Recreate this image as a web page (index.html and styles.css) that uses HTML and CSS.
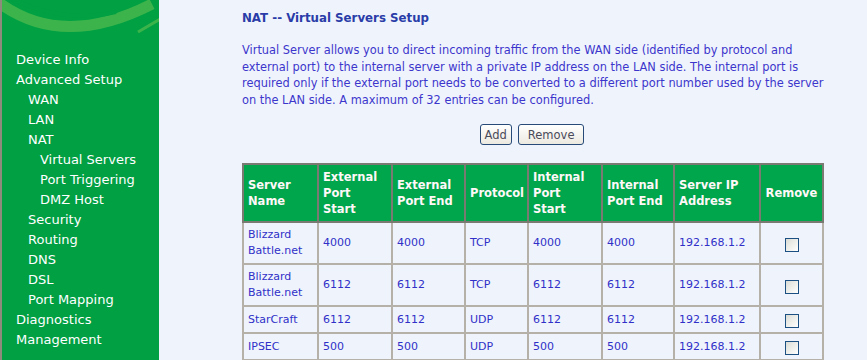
FILE: index.html
```html
<!DOCTYPE html>
<html>
	<head>
		<title>NAT -- Virtual Servers Setup</title>
		<meta charset="utf-8">
		<link rel="stylesheet" href="styles.css">
	</head>

	<body>
		<div class="page">
			<div class="menu">
				<svg class="logo" width="157" height="46" viewBox="0 0 157 46">
					<path d="M-4 2 Q60 50 150 4" stroke="#3cb44b" stroke-width="11" fill="none"/>
					<path d="M8 -2 Q60 24 114 12" stroke="#00a043" stroke-width="4" fill="none"/>
					<path d="M136 32 L160 18" stroke="#3cb44b" stroke-width="3" fill="none"/>
				</svg>
				<div class="menu-item">Device Info</div>
				<div class="menu-item">Advanced Setup</div>
				<div class="menu-item sub">WAN</div>
				<div class="menu-item sub">LAN</div>
				<div class="menu-item sub">NAT</div>
				<div class="menu-item subsub">Virtual Servers</div>
				<div class="menu-item subsub">Port Triggering</div>
				<div class="menu-item subsub">DMZ Host</div>
				<div class="menu-item sub">Security</div>
				<div class="menu-item sub">Routing</div>
				<div class="menu-item sub">DNS</div>
				<div class="menu-item sub">DSL</div>
				<div class="menu-item sub">Port Mapping</div>
				<div class="menu-item">Diagnostics</div>
				<div class="menu-item">Management</div>
			</div>

			<div class="content">
				<div class="title">NAT -- Virtual Servers Setup</div>
				<p class="intro">Virtual Server allows you to direct incoming traffic from the WAN side (identified by protocol and external port) to the internal server with a private IP address on the LAN side. The internal port is required only if the external port needs to be converted to a different port number used by the server on the LAN side. A maximum of 32 entries can be configured.</p>

				<div class="button-row">
					<button class="btn">Add</button>
					<button class="btn">Remove</button>
				</div>

				<table class="servers">
					<colgroup>
						<col style="width:75px">
						<col style="width:74px">
						<col style="width:73px">
						<col style="width:63px">
						<col style="width:74px">
						<col style="width:72px">
						<col style="width:86px">
						<col style="width:63px">
					</colgroup>
					<tr>
						<th>Server Name</th>
						<th>External Port Start</th>
						<th>External Port End</th>
						<th>Protocol</th>
						<th>Internal Port Start</th>
						<th>Internal Port End</th>
						<th>Server IP Address</th>
						<th class="center">Remove</th>
					</tr>
					<tr>
						<td>Blizzard Battle.net</td>
						<td>4000</td>
						<td>4000</td>
						<td>TCP</td>
						<td>4000</td>
						<td>4000</td>
						<td>192.168.1.2</td>
						<td class="center"><input type="checkbox" class="rm"></td>
					</tr>
					<tr>
						<td>Blizzard Battle.net</td>
						<td>6112</td>
						<td>6112</td>
						<td>TCP</td>
						<td>6112</td>
						<td>6112</td>
						<td>192.168.1.2</td>
						<td class="center"><input type="checkbox" class="rm"></td>
					</tr>
					<tr>
						<td>StarCraft</td>
						<td>6112</td>
						<td>6112</td>
						<td>UDP</td>
						<td>6112</td>
						<td>6112</td>
						<td>192.168.1.2</td>
						<td class="center"><input type="checkbox" class="rm"></td>
					</tr>
					<tr>
						<td>IPSEC</td>
						<td>500</td>
						<td>500</td>
						<td>UDP</td>
						<td>500</td>
						<td>500</td>
						<td>192.168.1.2</td>
						<td class="center"><input type="checkbox" class="rm"></td>
					</tr>
				</table>
			</div>
		</div>
	</body>
</html>
```

FILE: styles.css
```css
body {
  margin: 0px;
  background-color: #eff4fc;
  font-family: 'DejaVu Sans', Verdana, sans-serif;
}

.page{
  display: flex;
  height: 360px;
  overflow: hidden;
}

.menu{
  flex: none;
  width: 157px;
  border-left: 2px solid #8d8b7c;
  background-color: #00a043;
  overflow: hidden;
}

.logo{
  display: block;
  margin-bottom: 4px;
}

.menu-item{
  padding-left: 14px;
  font-size: 13px;
  line-height: 20px;
  color: #ffffff;
  white-space: nowrap;
}

.menu-item.sub{
  padding-left: 26px;
}

.menu-item.subsub{
  padding-left: 38px;
}

.content{
  padding: 10px 0 0 83px;
}

.title{
  font-size: 11.8px;
  font-weight: bold;
  line-height: 16px;
  color: #2a3ca8;
}

.intro{
  width: 590px;
  margin: 16px 0 16px 0;
  font-size: 11.4px;
  line-height: 16.6px;
  color: #3d36cc;
}

.button-row{
  width: 580px;
  display: flex;
  justify-content: center;
  gap: 6px;
  margin-bottom: 18px;
}

.btn{
  height: 21px;
  padding: 0 4px;
  border: 1px solid #284a78;
  border-radius: 3px;
  background: linear-gradient(#ffffff, #ece9e0);
  font-family: 'DejaVu Sans', Verdana, sans-serif;
  font-size: 11.5px;
  color: #4a4a5a;
}

.btn + .btn{
  padding: 0 9px;
}

.servers{
  width: 580px;
  table-layout: fixed;
  border-collapse: collapse;
}

.servers th{
  padding: 4px;
  border: 2px solid #7a7a72;
  background-color: #00a64c;
  font-size: 11.5px;
  line-height: 16px;
  color: #fff8f8;
  text-align: left;
}

.servers td{
  padding: 4px;
  border: 2px solid #b6b1a8;
  font-size: 11px;
  line-height: 16px;
  color: #3030c8;
}

.servers .center{
  text-align: center;
}

.rm{
  appearance: none;
  width: 14px;
  height: 14px;
  margin: 3px 0 0 0;
  vertical-align: top;
  border: 1px solid #1c4f82;
  background: linear-gradient(135deg, #dcdcd6, #ffffff);
}
```
